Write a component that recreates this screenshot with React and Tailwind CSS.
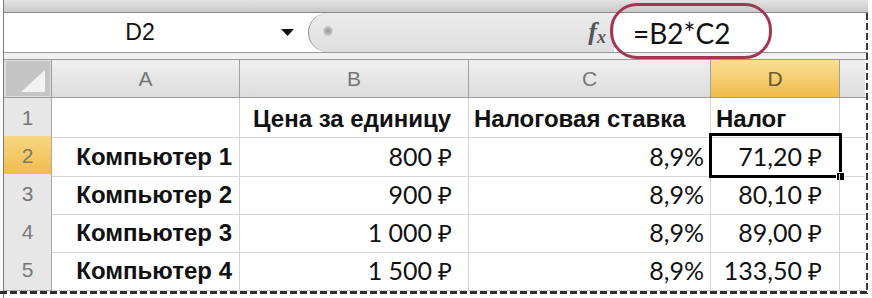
import React from "react";

const rows = [
  { n: "1", a: "", b: "Цена за единицу", c: "Налоговая ставка", d: "Налог", head: true },
  { n: "2", a: "Компьютер 1", b: "800", c: "8,9%", d: "71,20", sel: true },
  { n: "3", a: "Компьютер 2", b: "900", c: "8,9%", d: "80,10" },
  { n: "4", a: "Компьютер 3", b: "1 000", c: "8,9%", d: "89,00" },
  { n: "5", a: "Компьютер 4", b: "1 500", c: "8,9%", d: "133,50" },
];

const num = "font-['Lato','Noto_Sans',sans-serif] text-[25px] text-[#111]";
const bold = "font-['Liberation_Sans',Arial,sans-serif] font-bold text-[24px] text-[#111]";

function Rub({ v }) {
  return (
    <span className="flex items-baseline">
      <span>{v}</span>
      <span className="ml-[6px] text-[24px] font-['Noto_Sans',sans-serif]">₽</span>
    </span>
  );
}

export default function App() {
  return (
    <div className="w-[872px] h-[298px] bg-white overflow-hidden relative font-['Liberation_Sans',Arial,sans-serif]">
      <div className="ml-[3px] w-[865px] h-full border-l border-[#7c7c7c] flex flex-col">
        {/* top band */}
        <div className="h-[13px] shrink-0 bg-gradient-to-b from-[#e2e2e2] to-[#c9c9c9] border-b border-[#8a8a8a]" />
        {/* formula bar */}
        <div className="h-[40px] shrink-0 flex border-b border-[#9a9a9a]">
          <div className="w-[304px] shrink-0 flex items-center bg-white">
            <div className="w-[272px] text-center text-[23px] text-[#111]">D2</div>
            <svg width="13" height="7" viewBox="0 0 13 7" className="ml-[5px]">
              <polygon points="0,0 13,0 6.5,7" fill="#111" />
            </svg>
          </div>
          <div className="w-[306px] shrink-0 flex items-center bg-gradient-to-b from-[#ececec] to-[#dedede] border-l border-[#8f8f8f] rounded-l-[22px] relative">
            <div className="ml-[14px] mb-[4px] w-[10px] h-[10px] rounded-full bg-[radial-gradient(circle,#8c8c8c_0%,#b8b8b8_45%,#e4e4e4_100%)]" />
            <div className="ml-auto mr-[8px] font-['Liberation_Serif',serif] italic font-bold text-[#555] text-[26px] leading-none pb-[2px]">
              f<span className="text-[18px] relative top-[3px]">x</span>
            </div>
          </div>
          <div className="flex-1 flex items-center bg-white pl-[19px] text-[28px] text-[#111] font-['Lato',sans-serif]">
            =B2*C2
          </div>
        </div>
        {/* strip */}
        <div className="h-[7px] shrink-0 bg-[#f1f1f1] border-b border-[#9a9a9a]" />
        {/* header row */}
        <div className="h-[38px] shrink-0 grid grid-cols-[48px_188px_229px_242px_129px_25px] border-b border-[#9c9c9c]">
          <div className="bg-[#dcdcdc] border-r border-[#9c9c9c] p-[1px] pl-[2px]">
            <div className="w-full h-full bg-[#c5c5c5] relative">
              <svg width="24" height="22" viewBox="0 0 24 22" className="absolute right-[5px] bottom-[4px]">
                <polygon points="0,22 24,22 24,0" fill="#f2f2f2" />
              </svg>
            </div>
          </div>
          {["A", "B", "C"].map((l) => (
            <div key={l} className="bg-gradient-to-b from-[#efefef] to-[#dddddd] border-r border-[#a0a0a0] flex items-center justify-center text-[21px] text-[#777]">
              {l}
            </div>
          ))}
          <div className="bg-gradient-to-b from-[#fadf95] to-[#f0bb48] border-r border-[#a0a0a0] flex items-center justify-center text-[21px] text-[#6b5a30]">
            D
          </div>
          <div className="bg-gradient-to-b from-[#efefef] to-[#dddddd]" />
        </div>
        {/* data rows */}
        {rows.map((r) => (
          <div key={r.n} className="h-[38px] shrink-0 grid grid-cols-[48px_188px_229px_242px_129px_25px]">
            <div className={`${r.sel ? "bg-gradient-to-b from-[#f8d680] to-[#f0bb48]" : "bg-[#e7e7e7]"} border-r border-b border-[#a9a9a9] flex items-center justify-center text-[21px] text-[#777]`}>
              {r.n}
            </div>
            <div className={`border-r border-b border-[#d5d5d5] flex items-center justify-end pr-[7px] pt-[2px] ${bold}`}>
              {r.a}
            </div>
            {r.head ? (
              <>
                <div className={`border-r border-b border-[#d5d5d5] flex items-center pl-[13px] pt-[3px] ${bold}`}>{r.b}</div>
                <div className={`border-r border-b border-[#d5d5d5] flex items-center pl-[5px] pt-[3px] ${bold}`}>{r.c}</div>
                <div className={`border-r border-b border-[#d5d5d5] flex items-center pl-[5px] pt-[3px] ${bold}`}>{r.d}</div>
              </>
            ) : (
              <>
                <div className={`border-r border-b border-[#d5d5d5] flex items-center justify-end pr-[16px] pt-[2px] ${num}`}>
                  <Rub v={r.b} />
                </div>
                <div className={`border-r border-b border-[#d5d5d5] flex items-center justify-end pr-[6px] pt-[2px] ${num}`}>{r.c}</div>
                <div className={`relative border-r border-b border-[#d5d5d5] flex items-center justify-end pr-[17px] pt-[2px] ${num}`}>
                  <Rub v={r.d} />
                  {r.sel && (
                    <>
                      <div className="absolute left-[-2px] top-[-3px] right-[-3px] bottom-[-2px] border-[3px] border-black" />
                      <div className="absolute right-[-6px] bottom-[-5px] w-[9px] h-[9px] bg-black border border-white" />
                    </>
                  )}
                </div>
              </>
            )}
            <div className="border-b border-[#d5d5d5]" />
          </div>
        ))}
      </div>
      {/* page break dashed lines */}
      <div className="absolute left-0 top-[291px] w-[869px] h-[3px] bg-[repeating-linear-gradient(90deg,#2e2e2e_0_7px,transparent_7px_10px)]" />
      <div className="absolute left-[866px] top-[13px] w-[2px] h-[281px] bg-[repeating-linear-gradient(180deg,#3a3a3a_0_7px,transparent_7px_10px)]" />
      {/* red annotation */}
      <div className="absolute left-[610px] top-[3px] w-[162px] h-[56px] rounded-[27px] border-[3px] border-[#a63552]" />
    </div>
  );
}
